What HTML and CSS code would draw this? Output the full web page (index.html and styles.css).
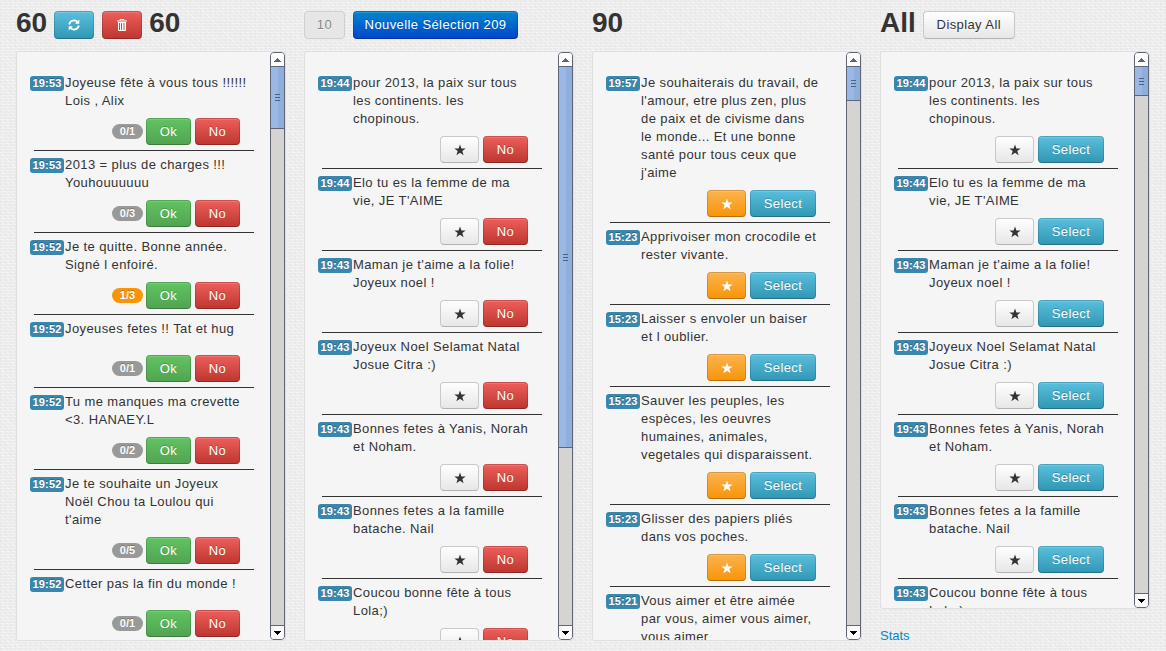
FILE: index.html
```
<!DOCTYPE html>
<html lang="fr">
<head>
<meta charset="utf-8">
<title>Messages</title>
<link rel="stylesheet" href="styles.css">
</head>
<body>
<main class="board" id="board"></main>
<script src="app.js"></script>
</body>
</html>
```
FILE: styles.css
```
* { box-sizing: border-box; }
body {
  margin: 0;
  height: 651px;
  overflow: hidden;
  color: #333;
  font: 13px/18px "Liberation Sans", Arial, sans-serif;
  letter-spacing: .4px;
  background-color: #ebebeb;
  background-image:
    repeating-linear-gradient(0deg, rgba(255,255,255,.3) 0 1px, transparent 1px 3px),
    repeating-linear-gradient(90deg, rgba(0,0,0,.018) 0 1px, transparent 1px 5px),
    repeating-linear-gradient(45deg, rgba(255,255,255,.25) 0 1px, transparent 1px 4px);
}
.board { display: flex; gap: 18px; padding-left: 16px; }
.column { width: 270px; flex: none; }
.head { display: flex; align-items: flex-start; gap: 8px; height: 51px; padding-top: 11px; }
.count { font-size: 28px; line-height: 24px; font-weight: bold; letter-spacing: 0; margin: 0; }
.count + .btn { margin-left: -1px; }
.btn + .count { margin-left: -1px; }
.btn {
  display: flex; align-items: center; justify-content: center;
  height: 27px; padding: 0; margin: 0;
  color: #fff; font: inherit; letter-spacing: .4px; white-space: nowrap;
  border: 1px solid rgba(0,0,0,.15); border-bottom-color: rgba(0,0,0,.25);
  border-radius: 4px;
  background-origin: border-box;
  box-shadow: inset 0 1px 0 rgba(255,255,255,.15);
  text-shadow: 0 -1px 0 rgba(0,0,0,.2);
}
.head .btn { height: 28px; }
.icon-btn { width: 40px; }
.icon { width: 14px; height: 14px; }
.info { background-image: linear-gradient(#5bc0de, #2f96b4); }
.danger { background-image: linear-gradient(#ee5f5b, #bd362f); }
.success { background-image: linear-gradient(#62c462, #51a351); }
.warning { background-image: linear-gradient(#fbb450, #f89406); }
.primary { background-image: linear-gradient(#0088cc, #0044cc); width: 165px; }
.plain { color: #333; text-shadow: 0 1px 1px rgba(255,255,255,.75); background-image: linear-gradient(#fff, #e6e6e6); border-color: #c9c9c9; border-bottom-color: #b3b3b3; }
.disabled { width: 41px; color: #888; background: #e6e6e6; border-color: #cfcfcf; }
.display { width: 92px; }
.panel {
  display: flex; height: 590px; overflow: hidden;
  background: #f5f5f5; border: 1px solid #e0e0e0; border-radius: 3px;
}
.short { height: 558px; }
.list { width: 253px; flex: none; padding: 22px 16px 0 13px; overflow: hidden; }
.item { padding-bottom: 5px; }
.line { display: flex; gap: 1px; min-height: 27px; }
.time {
  flex: none; width: 34px; height: 15px; margin-top: 2px; border-radius: 3px;
  background: #3a87ad; color: #fff; font: bold 11px/15px "Liberation Sans", Arial, sans-serif;
  text-align: center; letter-spacing: .2px; text-shadow: 0 -1px 0 rgba(0,0,0,.25);
}
.text { margin: 0; white-space: nowrap; }
.actions {
  display: flex; justify-content: flex-end; align-items: center; gap: 4px;
  margin: 8px 0 0 4px; padding: 0 14px 5px 0; border-bottom: 1px solid #333;
}
.votes {
  width: 31px; height: 15px; margin-right: -1px; border-radius: 8px; background: #999; color: #fff;
  font: bold 11px/15px "Liberation Sans", Arial, sans-serif; letter-spacing: 0; text-align: center;
  text-shadow: 0 -1px 0 rgba(0,0,0,.25);
}
.votes.hot { background: #f89406; }
.w45 { width: 45px; }
.w39 { width: 39px; }
.w66 { width: 66px; }
.scroll {
  width: 15px; display: flex; flex-direction: column; overflow: hidden;
  border: 1px solid #5f6573; border-radius: 4px; background: #d6d4d2;
}
.arrow { display: flex; align-items: center; justify-content: center; flex: none; height: 14px; background: #fcfcfc; }
.arrow svg { width: 7px; height: 4px; }
.up { border-bottom: 1px solid #5f6573; fill: #5f6573; }
.down { margin-top: auto; border-top: 1px solid #5f6573; fill: #000; }
.thumb {
  display: flex; flex-direction: column; align-items: center; justify-content: center; gap: 2px; flex: none;
  border-bottom: 1px solid #5f6573; background: linear-gradient(90deg, #99b8e5 0 7px, #8eaedb 7px);
}
.grip { width: 5px; height: 1px; background: #53617a; }
.footer-link { display: block; margin-top: 18px; color: #08c; text-decoration: none; letter-spacing: 0; }
```
FILE: app.js
```
const star = '<svg class="icon" viewBox="0 0 14 14" fill="currentColor"><path d="M7 1.5 8.4 5.5H12.7L9.3 8.1 10.6 12.2 7 9.7 3.4 12.2 4.7 8.1 1.3 5.5H5.6Z"/></svg>';
const refresh = '<svg class="icon" viewBox="0 0 14 14" fill="none" stroke="#fff" stroke-width="1.7"><path d="M2.2 6.5A4.8 4.8 0 0 1 10.8 4.4M11.8 7.5A4.8 4.8 0 0 1 3.2 9.6"/><path d="M12.3 1.5V5.8H8ZM1.7 12.5V8.2H6Z" fill="#fff" stroke="none"/></svg>';
const trash = '<svg class="icon" viewBox="0 0 14 14" fill="none" stroke="#fff"><path d="M5 2.5V1.5H9V2.5M2 3H12M3.5 5V12.5H10.5V5M5.5 5V12M7.5 5V12M9 5V12M3 4.5H11"/></svg>';

const shared = [
  ['19:44', 'pour 2013, la paix sur tous|les continents. les|chopinous.'],
  ['19:44', "Elo tu es la femme de ma|vie, JE T'AIME"],
  ['19:43', "Maman je t'aime a la folie!|Joyeux noel !"],
  ['19:43', 'Joyeux Noel Selamat Natal|Josue Citra :)'],
  ['19:43', 'Bonnes fetes à Yanis, Norah|et Noham.'],
  ['19:43', 'Bonnes fetes a la famille|batache. Nail'],
  ['19:43', 'Coucou bonne fête à tous|Lola;)']
];

const no = '<button class="btn danger w45">No</button>';
const select = '<button class="btn info w66">Select</button>';
const plainStar = `<button class="btn plain w39">${star}</button>`;
const votes = v => `<span class="votes${v === '1/3' ? ' hot' : ''}">${v}</span><button class="btn success w45">Ok</button>${no}`;

const columns = [
  {
    head: `<h2 class="count">60</h2><button class="btn info icon-btn">${refresh}</button><button class="btn danger icon-btn">${trash}</button><h2 class="count">60</h2>`,
    thumb: 62,
    actions: m => votes(m[2]),
    items: [
      ['19:53', 'Joyeuse fête à vous tous !!!!!!|Lois , Alix', '0/1'],
      ['19:53', '2013 = plus de charges !!!|Youhouuuuuu', '0/3'],
      ['19:52', 'Je te quitte. Bonne année.|Signé l enfoiré.', '1/3'],
      ['19:52', 'Joyeuses fetes !! Tat et hug', '0/1'],
      ['19:52', 'Tu me manques ma crevette|&lt;3. HANAEY.L', '0/2'],
      ['19:52', "Je te souhaite un Joyeux|Noël Chou ta Loulou qui|t'aime", '0/5'],
      ['19:52', 'Cetter pas la fin du monde !', '0/1']
    ]
  },
  {
    head: '<button class="btn plain disabled">10</button><button class="btn primary">Nouvelle Sélection 209</button>',
    thumb: 381,
    actions: () => plainStar + no,
    items: shared
  },
  {
    head: '<h2 class="count">90</h2>',
    thumb: 34,
    actions: () => `<button class="btn warning w39">${star}</button>${select}`,
    items: [
      ['19:57', "Je souhaiterais du travail, de|l'amour, etre plus zen, plus|de paix et de civisme dans|le monde... Et une bonne|santé pour tous ceux que|j'aime"],
      ['15:23', 'Apprivoiser mon crocodile et|rester vivante.'],
      ['15:23', 'Laisser s envoler un baiser|et l oublier.'],
      ['15:23', 'Sauver les peuples, les|espèces, les oeuvres|humaines, animales,|vegetales qui disparaissent.'],
      ['15:23', 'Glisser des papiers pliés|dans vos poches.'],
      ['15:21', 'Vous aimer et être aimée|par vous, aimer vous aimer,|vous aimer']
    ]
  },
  {
    head: '<h2 class="count">All</h2><button class="btn plain display">Display All</button>',
    thumb: 29,
    short: true,
    actions: () => plainStar + select,
    items: shared,
    foot: '<a class="footer-link" href="#">Stats</a>'
  }
];

const item = (m, c) => `<article class="item"><div class="line"><span class="time">${m[0]}</span><p class="text">${m[1].split('|').join('<br>')}</p></div><div class="actions">${c.actions(m)}</div></article>`;

document.getElementById('board').innerHTML = columns.map(c => `
<section class="column">
  <header class="head">${c.head}</header>
  <div class="panel${c.short ? ' short' : ''}">
    <div class="list">${c.items.map(m => item(m, c)).join('')}</div>
    <div class="scroll">
      <div class="arrow up"><svg viewBox="0 0 7 4"><path d="M3 0H4V1H5V2H6V3H7V4H0V3H1V2H2V1H3Z"/></svg></div>
      <div class="thumb" style="height:${c.thumb}px"><i class="grip"></i><i class="grip"></i><i class="grip"></i></div>
      <div class="arrow down"><svg viewBox="0 0 7 4"><path d="M0 0H7V1H6V2H5V3H4V4H3V3H2V2H1V1H0Z"/></svg></div>
    </div>
  </div>
  ${c.foot || ''}
</section>`).join('');
```
